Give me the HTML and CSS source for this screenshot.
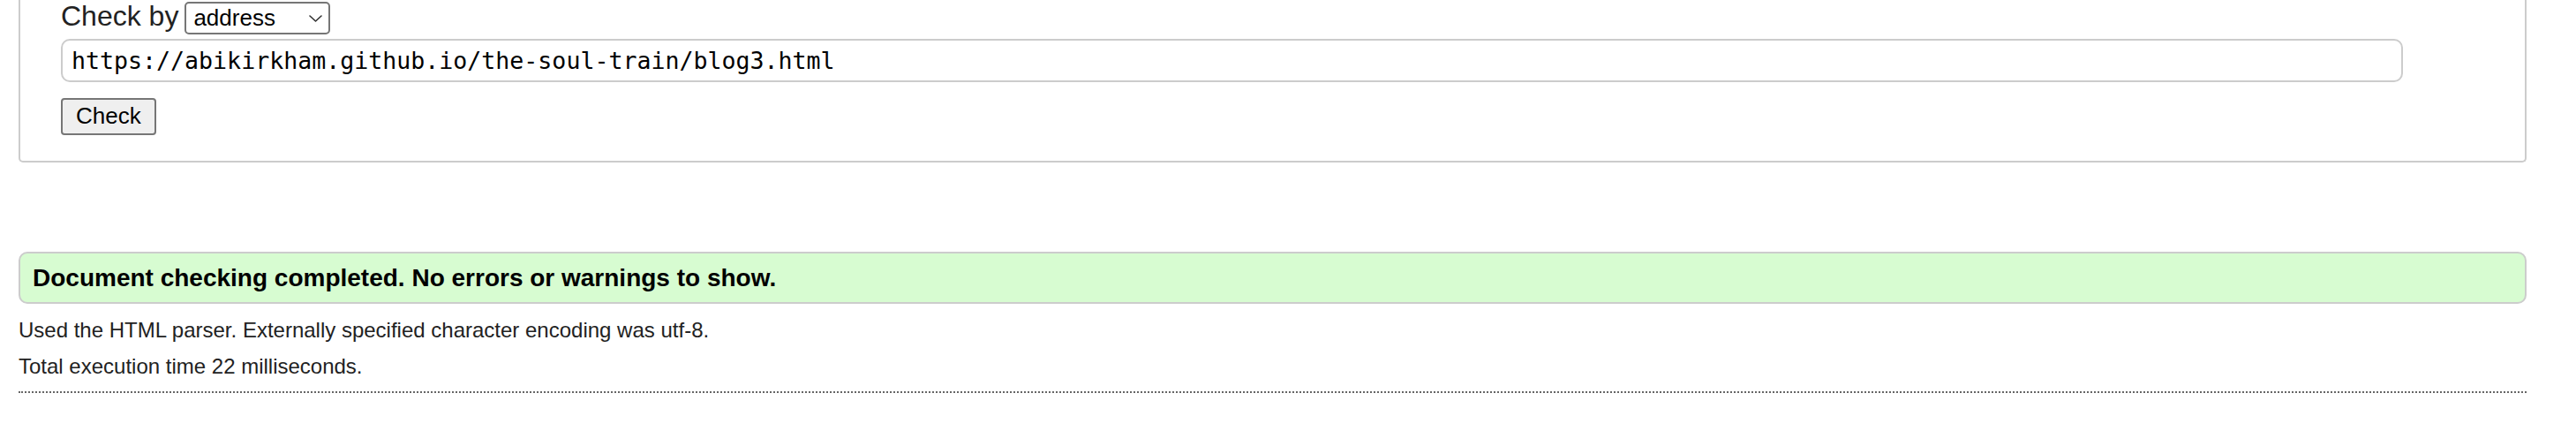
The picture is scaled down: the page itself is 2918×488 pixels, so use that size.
FILE: index.html
```html
<!DOCTYPE html>
<html lang="en">
<head>
<meta charset="utf-8">
<title>Nu Html Checker</title>
<link rel="stylesheet" href="styles.css">
</head>
<body>
<form class="check-form">
  <fieldset class="panel">
    <div class="check-by">
      <label for="docselect" class="check-by-label">Check by</label>
      <span class="select-wrap">
        <select id="docselect" class="doc-select">
          <option>address</option>
          <option>file upload</option>
          <option>text input</option>
        </select>
        <svg class="chevron" width="15" height="8" viewBox="0 0 15 8" aria-hidden="true"><path d="M1 1 L7.5 7 L14 1" fill="none" stroke="#333" stroke-width="1.6" stroke-linecap="round" stroke-linejoin="round"/></svg>
      </span>
    </div>
    <input type="url" class="doc-input" value="https://abikirkham.github.io/the-soul-train/blog3.html">
    <div class="submit-row"><button type="submit" class="check-btn">Check</button></div>
  </fieldset>
</form>
<section class="results">
  <p class="success">Document checking completed. No errors or warnings to show.</p>
  <p class="details details-first">Used the HTML parser. Externally specified character encoding was utf-8.</p>
  <p class="details">Total execution time 22 milliseconds.</p>
</section>
<div class="footer-rule"></div>
</body>
</html>
```
FILE: styles.css
```css
html, body {
  background: #fff;
}
body {
  margin: 0;
  padding: 0 56px 0 21px;
  font-family: "Liberation Sans", Arial, sans-serif;
  color: #222;
}
.check-form {
  margin: 0 0 101px;
}
.panel {
  margin: 0;
  min-inline-size: 0;
  padding: 0 46px 29px;
  border: 2px solid #ccc;
  border-top: 0;
  border-radius: 0 0 5px 5px;
}
.check-by {
  display: flex;
  align-items: baseline;
  gap: 7px;
}
.check-by-label {
  font-size: 32px;
  color: #222;
}
.select-wrap {
  position: relative;
  display: inline-flex;
}
.doc-select {
  appearance: none;
  -webkit-appearance: none;
  box-sizing: border-box;
  width: 165px;
  height: 37px;
  padding: 0 0 0 8px;
  border: 2px solid #767676;
  border-radius: 5px;
  background: #fff;
  color: #000;
  font-family: "Liberation Sans", Arial, sans-serif;
  font-size: 26px;
}
.chevron {
  position: absolute;
  right: 9px;
  top: 15px;
  pointer-events: none;
}
.doc-input {
  display: block;
  box-sizing: border-box;
  width: 2653px;
  height: 49px;
  margin: 5px 0 0;
  padding: 0 10px;
  border: 2px solid #ccc;
  border-radius: 10px;
  background: #fff;
  color: #000;
  font-family: "DejaVu Sans Mono", "Liberation Mono", monospace;
  font-size: 26.6px;
}
.submit-row {
  margin-top: 18px;
  display: flex;
}
.check-btn {
  box-sizing: border-box;
  height: 42px;
  padding: 0 15px;
  border: 2px solid #767676;
  border-radius: 4px;
  background: #efefef;
  color: #000;
  font-family: "Liberation Sans", Arial, sans-serif;
  font-size: 26px;
}
.results {
  margin: 0;
}
.success {
  margin: 0;
  padding: 0 14px;
  border: 2px solid #ccc;
  border-radius: 10px;
  background: #d7fcd1;
  color: #000;
  font-size: 28px;
  font-weight: bold;
  line-height: 55px;
}
.details {
  margin: 0;
  font-size: 24px;
  line-height: 41px;
  color: #222;
}
.details-first {
  margin-top: 9px;
}
.footer-rule {
  margin-top: 8px;
  height: 0;
  border-top: 2px dotted #666;
}
```
